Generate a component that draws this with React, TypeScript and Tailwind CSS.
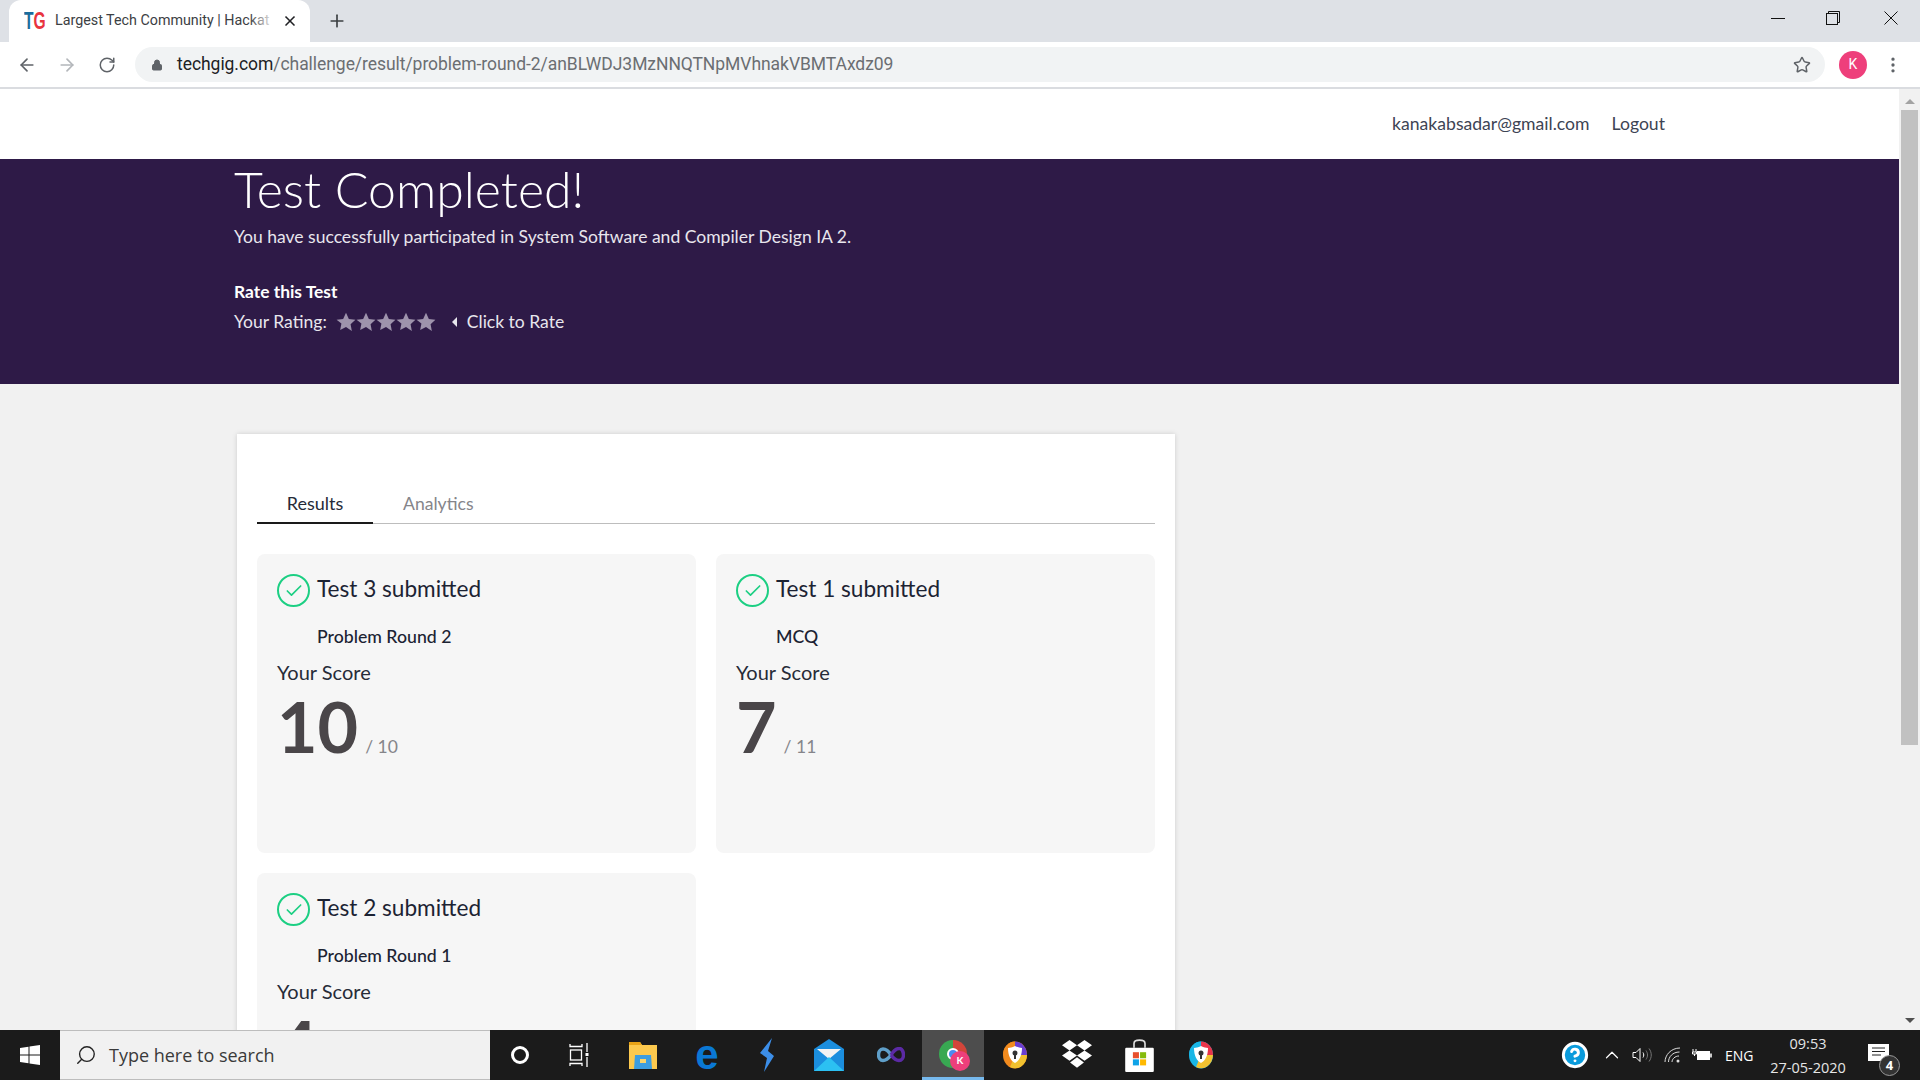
import React from 'react';
import { ArrowLeft, ArrowRight, RotateCw, Lock, Star, MoreVertical, Plus, X, Check, Search, ChevronUp, HelpCircle } from 'lucide-react';

const lato = "font-['Lato',sans-serif]";
const chromeFont = "font-['Roboto','Open_Sans',sans-serif]";

function TestCard({ title, sub, score, total }: { title: string; sub: string; score: string; total: string }) {
  return (
    <div className="h-[299px] rounded-lg bg-[#f6f6f6] px-5 pt-5">
      <div className="flex items-start gap-[7px]">
        <div className="flex h-[33px] w-[33px] shrink-0 items-center justify-center rounded-full border-2 border-[#1ccf83]">
          <Check size={20} strokeWidth={2} className="text-[#1ccf83]" />
        </div>
        <div className="text-[22.600px] leading-[29px] text-[#1c2333]">{title}</div>
      </div>
      <div className="mt-[19px] pl-[40px] text-[17.700px] font-medium leading-[22px] text-[#1c2333]">{sub}</div>
      <div className="mt-[12px] text-[20px] leading-[24px] text-[#262b38]">Your Score</div>
      <div className="mt-[2px] flex items-baseline">
        <span className="text-[70px] font-bold leading-[80px] text-[#4a4649]">{score}</span>
        <span className="ml-[7px] text-[17.500px] text-[#85858a]">/ {total}</span>
      </div>
    </div>
  );
}

function TaskIcon({ children, active }: { children: React.ReactNode; active?: boolean }) {
  return (
    <div className={`flex h-[50px] w-[62px] items-center justify-center ${active ? 'border-b-[3px] border-[#76b9ed] bg-[#4d4d4d]' : ''}`}>
      {children}
    </div>
  );
}

function Shield({ a, b, c, d }: { a: string; b: string; c: string; d: string }) {
  return (
    <svg width="26" height="28" viewBox="0 0 26 28">
      <ellipse cx="13" cy="14" rx="12" ry="13.5" fill={a} />
      <path d="M13 .5A12 13.5 0 0 1 25 14L13 14Z" fill={b} />
      <path d="M25 14A12 13.5 0 0 1 8 26L13 14Z" fill={c} />
      <path d="M1 14A12 13.5 0 0 1 13 .5L13 14Z" fill={d} />
      <path d="M13 5c3 1.500 5 1.500 7 2 0 8-3 13-7 15-4-2-7-7-7-15 2-.5 4-.5 7-2Z" fill="#fff" />
      <circle cx="13" cy="12" r="2.500" fill="#333" />
      <rect x="12" y="13" width="2" height="5" fill="#333" />
    </svg>
  );
}

export default function App() {
  return (
    <div className={`flex h-[1080px] w-[1920px] flex-col overflow-hidden bg-white ${lato}`}>
      {/* tab strip */}
      <div className="flex h-[42px] shrink-0 items-center bg-[#dee1e6] pl-[9px]">
        <div className={`flex h-[42px] w-[301px] items-center rounded-t-xl bg-white pl-[15px] pr-[12px] ${chromeFont}`}>
          <span className="inline-block w-[22px] origin-left scale-x-[0.65] whitespace-nowrap font-['Liberation_Sans',sans-serif] text-[24px] font-bold leading-none">
            <span className="text-[#1a6c9c]">T</span><span className="text-[#e8343f]">G</span>
          </span>
          <span className="relative ml-[9px] w-[220px] whitespace-nowrap text-[14.300px] text-[#3c4043]">
            Largest Tech Community | Hackat
            <span className="absolute inset-y-0 right-0 w-[26px] bg-gradient-to-r from-transparent to-white" />
          </span>
          <X size={16} strokeWidth={2.5} className="ml-auto text-[#202124]" />
        </div>
        <Plus size={20} strokeWidth={2} className="ml-[17px] text-[#3c4043]" />
        <div className="mb-[6px] ml-auto flex items-center">
          <svg width="14" height="14" viewBox="0 0 14 14" stroke="#111" className="mr-[41px]"><path d="M0 7.500h14" /></svg>
          <svg width="14" height="14" viewBox="0 0 14 14" fill="none" stroke="#111" className="mr-[44px]">
            <rect x=".5" y="2.500" width="11" height="11" />
            <path d="M2.500 2.500V.5h11v11h-2" />
          </svg>
          <svg width="14" height="14" viewBox="0 0 14 14" fill="none" stroke="#111" className="mr-[22px]"><path d="M.5.5l13 13M13.500.5l-13 13" /></svg>
        </div>
      </div>

      {/* toolbar */}
      <div className="flex h-[47px] shrink-0 items-center border-b-2 border-[#dadce0] bg-white">
        <ArrowLeft size={20} strokeWidth={2} className="ml-[17px] text-[#5f6368]" />
        <ArrowRight size={20} strokeWidth={2} className="ml-[20px] text-[#b3b6ba]" />
        <RotateCw size={18} strokeWidth={2} className="ml-[21px] text-[#5f6368]" />
        <div className={`ml-[19px] flex h-[35px] w-[1690px] items-center rounded-full bg-[#f1f3f4] pl-[16px] pr-[14px] ${chromeFont}`}>
          <Lock size={12} fill="#5f6368" className="text-[#5f6368]" />
          <span className="ml-[14px] text-[17.500px] tracking-[-0.05px] text-[#6b6e72]"><span className="text-[#202124]">techgig.com</span>/challenge/result/problem-round-2/anBLWDJ3MzNNQTNpMVhnakVBMTAxdz09</span>
          <Star size={18} strokeWidth={2} className="ml-auto text-[#5f6368]" />
        </div>
        <div className={`ml-[14px] flex h-[28px] w-[28px] items-center justify-center rounded-full bg-[#ee3f7b] text-[14px] text-white ${chromeFont}`}>K</div>
        <MoreVertical size={20} className="ml-[16px] text-[#5f6368]" />
      </div>

      {/* page */}
      <div className="flex min-h-0 flex-1 overflow-hidden bg-[#f1f1f1]">
        <div className="min-w-0 flex-1">
          <div className="flex h-[70px] items-center justify-end bg-white pr-[234px] pt-[1px] text-[17.600px] text-[#3d4454]">
            <span>kanakabsadar@gmail.com</span>
            <span className="ml-[22px]">Logout</span>
          </div>
          <div className="h-[225px] bg-[#2e1a47] pl-[234px] text-white">
            <h1 className="pt-[1px] text-[50px] font-light leading-[58px]">Test Completed!</h1>
            <p className="mt-[6px] text-[17.550px] leading-[26px] text-[#e8e6ed]">You have successfully participated in System Software and Compiler Design IA 2.</p>
            <p className="mt-[29px] text-[17.400px] font-bold leading-[26px]">Rate this Test</p>
            <div className="mt-[4px] flex h-[26px] items-center text-[17.550px] text-[#e8e6ed]">
              <span>Your Rating:</span>
              <span className="ml-[9px] flex text-[#9e93ac]">
                {[0, 1, 2, 3, 4].map((i) => (
                  <svg key={i} width="20" height="20" viewBox="0 0 24 24" fill="currentColor"><path d="M12 1l3.400 7.300 7.900 1-5.800 5.500 1.500 7.900L12 18l-7 3.700 1.500-7.900L.7 9.300l7.900-1z" /></svg>
                ))}
              </span>
              <span className="ml-[16px] h-0 w-0 border-y-[5px] border-r-[5px] border-y-transparent border-r-[#e8e6ed]" />
              <span className="ml-[10px]">Click to Rate</span>
            </div>
          </div>
          <div className="ml-[237px] mt-[50px] h-[700px] w-[938px] bg-white px-5 pt-[49px] shadow-[0_0_5px_rgba(0,0,0,0.15)]">
            <div className="flex h-[41px] border-b border-[#bdbdbd]">
              <div className="flex h-[41px] w-[116px] items-start justify-center border-b-2 border-[#1a1a1a] pt-[7px] text-[18px] text-[#262b38]">Results</div>
              <div className="ml-[30px] pt-[8px] text-[17.600px] text-[#85858a]">Analytics</div>
            </div>
            <div className="mt-[30px] grid grid-cols-2 gap-5">
              <TestCard title="Test 3 submitted" sub="Problem Round 2" score="10" total="10" />
              <TestCard title="Test 1 submitted" sub="MCQ" score="7" total="11" />
              <TestCard title="Test 2 submitted" sub="Problem Round 1" score="4" total="10" />
            </div>
          </div>
        </div>
        {/* scrollbar */}
        <div className="flex w-[21px] shrink-0 flex-col items-center bg-[#f1f1f1]">
          <div className="mt-[10px] h-0 w-0 border-x-[5px] border-b-[5px] border-x-transparent border-b-[#a3a3a3]" />
          <div className="mt-[6px] h-[635px] w-[17px] bg-[#c1c1c1]" />
          <div className="mb-[7px] mt-auto h-0 w-0 border-x-[5px] border-t-[5px] border-x-transparent border-t-[#505050]" />
        </div>
      </div>

      {/* taskbar */}
      <div className="flex h-[50px] shrink-0 items-center bg-[#1b1b1b] text-white">
        <div className="flex h-[50px] w-[60px] items-center justify-center">
          <svg width="20" height="20" viewBox="0 0 20 20" fill="#fff">
            <path d="M0 3l8.500-1.200v7.700H0zM9.500 1.600L20 0v9.500H9.500zM0 10.500h8.500v7.700L0 17zM9.500 10.500H20V20l-10.500-1.600z" />
          </svg>
        </div>
        <div className="flex h-[50px] w-[430px] items-center border-y border-[#bdbdbd] bg-[#f1f1f1] pl-[15px] font-['Open_Sans',sans-serif] text-[18px] text-[#3a3a3a]">
          <Search size={22} strokeWidth={1.5} className="-scale-x-100 text-[#222]" />
          <span className="ml-[12px]">Type here to search</span>
        </div>
        <div className="flex h-[50px] w-[59px] items-center justify-center">
          <div className="h-[18px] w-[18px] rounded-full border-[3px] border-white" />
        </div>
        <div className="flex h-[50px] w-[63px] items-center justify-center">
          <svg width="20" height="24" viewBox="0 0 20 24" fill="none" stroke="#fff" strokeWidth="1.300" className="-translate-x-[2px]">
            <path d="M1 1v2.500h12V1M1 23v-2.500h12V23" />
            <rect x="1.500" y="7" width="11" height="10" />
            <path d="M18 0v9M18 14v10" />
            <rect x="16.500" y="10" width="3" height="3" fill="#fff" stroke="none" />
          </svg>
        </div>
        <TaskIcon>
          <svg width="28" height="28" viewBox="0 0 28 28">
            <path d="M0 1h11l2 3h15v24H0z" fill="#fcc94e" />
            <path d="M0 1h11l2 3H0z" fill="#e8a317" />
            <path d="M6 14h16l1 14H5z" fill="#3d9de0" />
            <rect x="11" y="18" width="6" height="4" fill="#fcd56b" />
          </svg>
        </TaskIcon>
        <TaskIcon>
          <span className="translate-x-[2px] font-['Liberation_Sans',sans-serif] text-[42px] font-bold leading-[42px] text-[#0a78d4]">e</span>
        </TaskIcon>
        <TaskIcon>
          <svg width="16" height="34" viewBox="0 0 16 34">
            <path d="M13 0L1 15l7 5-3 14 10-16-6-5z" fill="#3c8ee8" />
          </svg>
        </TaskIcon>
        <TaskIcon>
          <svg width="30" height="32" viewBox="0 0 30 32">
            <path d="M0 10L15 0l15 10v22H0z" fill="#1b8ede" />
            <path d="M3 10h24L15 20z" fill="#f3f3f3" />
            <path d="M0 32L15 18l15 14z" fill="#2cc0f2" />
          </svg>
        </TaskIcon>
        <TaskIcon>
          <svg width="28" height="16" viewBox="0 0 28 16" fill="none" strokeWidth="3.500">
            <path d="M14 8C11 3 8 2 6 2 3 2 1.500 5 1.500 8s2 5.500 4.500 5.500S11 12 14 8" stroke="#5f9fc9" />
            <path d="M14 8c3-5 6-6.500 8.500-6.500S26.500 5 26.500 8s-2 5.500-4.500 5.500S17 12 14 8" stroke="#5b2aa5" />
          </svg>
        </TaskIcon>
        <TaskIcon active>
          <div className="relative h-[28px] w-[28px]">
            <div className="h-[28px] w-[28px] rounded-full bg-[conic-gradient(#d2453a_0_25%,#e6b93a_25%_45%,#38a852_45%_100%)]" />
            <div className="absolute left-[8px] top-[8px] h-[12px] w-[12px] rounded-full border-2 border-white bg-[#4a8bef]" />
            <div className="absolute left-[11px] top-[11px] flex h-[20px] w-[20px] items-center justify-center rounded-full bg-[#ee3f7b] text-[10px] font-bold">K</div>
          </div>
        </TaskIcon>
        <TaskIcon><Shield a="#f28b1e" b="#6a3fd1" c="#f2c230" d="#f28b1e" /></TaskIcon>
        <TaskIcon>
          <svg width="30" height="30" viewBox="0 0 26 26" fill="#fff">
            <path d="M6.500 0L13 4.500 6.500 9 0 4.500zM19.500 0L26 4.500 19.500 9 13 4.500zM6.500 9L13 13.500 6.500 18 0 13.500zM19.500 9L26 13.500 19.500 18 13 13.500zM13 15l6 4.500L13 24l-6-4.500z" />
          </svg>
        </TaskIcon>
        <TaskIcon>
          <svg width="29" height="33" viewBox="0 0 26 30">
            <path d="M8 8V4c0-4 10-4 10 0v4" fill="none" stroke="#ddd" strokeWidth="1.500" />
            <rect y="8" width="26" height="22" rx="1" fill="#fff" />
            <rect x="7" y="12" width="5.500" height="5.500" fill="#e8502d" />
            <rect x="13.500" y="12" width="5.500" height="5.500" fill="#84bb0d" />
            <rect x="7" y="18.500" width="5.500" height="5.500" fill="#0fa3e8" />
            <rect x="13.500" y="18.500" width="5.500" height="5.500" fill="#ffb900" />
          </svg>
        </TaskIcon>
        <TaskIcon><Shield a="#19b6e6" b="#e8344a" c="#f2c230" d="#19b6e6" /></TaskIcon>

        <div className="ml-auto flex items-center">
          <HelpCircle size={28} strokeWidth={2.5} className="fill-[#0a9bdc] text-white" />
          <ChevronUp size={22} strokeWidth={1.300} className="ml-[12px]" />
          <svg width="20" height="16" viewBox="0 0 20 16" fill="none" stroke="#fff" className="ml-[9px]">
            <path d="M1 5.500h3l4-4v13l-4-4H1z" />
            <path d="M11 5.500c1 1.500 1 3.500 0 5" />
            <path d="M14 3.500c2 3 2 6 0 9M17 1.500c3 4 3 9 0 13" stroke="#777" />
          </svg>
          <svg width="18" height="16" viewBox="0 0 18 16" fill="none" stroke="#ddd" className="ml-[12px]">
            <path d="M1 15C1 8 7 1 16 1M4.500 15c0-5 4-10 11-10M8 15c0-3 3-6 7-6" />
            <circle cx="14" cy="14" r="1.500" fill="#ddd" stroke="none" />
          </svg>
          <svg width="20" height="14" viewBox="0 0 20 14" className="ml-[10px]">
            <path d="M1 1v3M4 1v3M.5 4h4v2h-4zM2.500 6v2" stroke="#fff" fill="none" />
            <rect x="5" y="3" width="13" height="9" fill="#fff" />
            <rect x="18" y="5.500" width="2" height="4" fill="#ccc" />
          </svg>
          <span className="ml-[13px] w-[28px] whitespace-nowrap font-['Open_Sans',sans-serif] text-[14px]">ENG</span>
          <div className="ml-[15px] w-[80px] pt-[1px] text-center font-['Open_Sans',sans-serif] text-[14.500px] leading-[24px] text-[#e6e6e6]">
            <div>09:53</div>
            <div>27-05-2020</div>
          </div>
          <div className="relative ml-[20px] mr-[20px] h-[34px] w-[32px]">
            <svg width="21" height="18" viewBox="0 0 21 18" className="absolute left-0 top-[6px]">
              <path d="M0 0h21v17H0z" fill="#fff" />
              <path d="M4 4h13M4 7.500h13M4 11h9" stroke="#222" />
            </svg>
            <div className="absolute bottom-[-4px] right-0 flex h-[21px] w-[21px] items-center justify-center rounded-full border border-[#999] bg-[#333] font-['Open_Sans',sans-serif] text-[13px] font-bold">4</div>
          </div>
        </div>
      </div>
    </div>
  );
}
